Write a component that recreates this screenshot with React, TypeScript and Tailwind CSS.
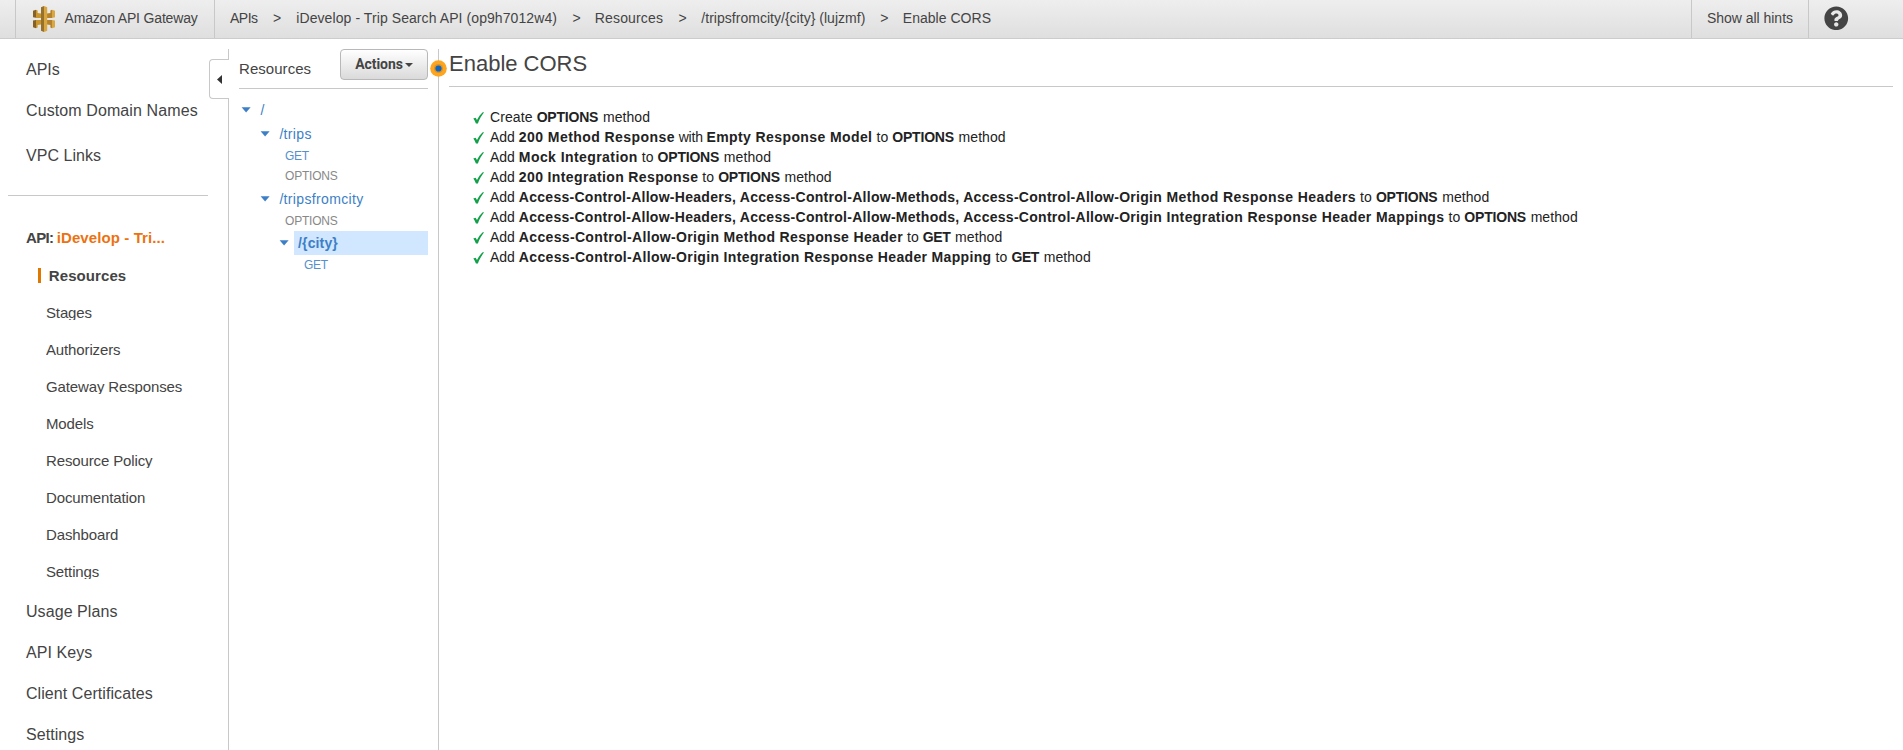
import React from "react";
import { FaQuestionCircle } from "react-icons/fa";

const crumbs = [
  { text: "APIs", cls: "w-[43px] tracking-[-0.5px]" },
  { text: ">", cls: "w-[23.3px]" },
  { text: "iDevelop - Trip Search API (op9h7012w4)", cls: "w-[276.1px] tracking-[0.08px]" },
  { text: ">", cls: "w-[22.4px]" },
  { text: "Resources", cls: "w-[83.700px] tracking-[0.15px]" },
  { text: ">", cls: "w-[22.9px]" },
  { text: "/tripsfromcity/{city} (lujzmf)", cls: "w-[178.9px] tracking-[0.02px]" },
  { text: ">", cls: "w-[22.6px]" },
  { text: "Enable CORS", cls: "tracking-[0.02px]" },
];

const apiItems = [
  "Stages",
  "Authorizers",
  "Gateway Responses",
  "Models",
  "Resource Policy",
  "Documentation",
  "Dashboard",
  "Settings",
];

const lowerItems = ["Usage Plans", "API Keys", "Client Certificates", "Settings"];

function Logo() {
  return (
    <svg width="22" height="26" viewBox="0 0 22 26" className="block shrink-0">
      <path d="M0 4.800 3 3.800V11.800L0 11.200z" fill="#876023" />
      <path d="M3 3.800l1.600.6V7L8 7.400V12H3z" fill="#c9952f" />
      <path d="M0 14.600 3 14v8.200l-3-1z" fill="#876023" />
      <path d="M3 14h5v4.600l-3.400.4v2.600l-1.600.6z" fill="#c9952f" />
      <path d="M17.400 4.400 19 3.800v8.200h-5V7.400l3.400-.4z" fill="#b5822b" />
      <path d="M19 3.800l3 1v6.400l-3 .8z" fill="#d9a741" />
      <path d="M14 14h5v8.200l-1.600-.6V19l-3.400-.4z" fill="#b5822b" />
      <path d="M19 14l3 .6v6.600l-3 1z" fill="#d9a741" />
      <path d="M8 1.300 11 0v26l-3-1.300z" fill="#97702a" />
      <path d="M11 0l3.200 1.300v23.400L11 26z" fill="#d9a741" />
    </svg>
  );
}

function Caret() {
  return (
    <svg width="10" height="6" viewBox="0 0 10 6" className="block shrink-0">
      <path d="M.6.300h9L5.100 5.500z" fill="#3d7fc6" />
    </svg>
  );
}

function Check() {
  return (
    <svg width="12" height="12" viewBox="0 0 12 12" className="mt-[5px] mr-[5px] block shrink-0">
      <path d="M.3 6.500 2.600 5.700 4 8.100C5.600 4.900 7.600 2 10 0l.9.600C8.500 3.800 6.400 7.200 4.900 11.500H2.900C2.200 9.600 1.400 7.900.3 6.500z" fill="#12a04a" />
    </svg>
  );
}

const Add = () => <span>Add </span>;
const To = () => <span className="tracking-[0.1px]"> to </span>;
const Options = () => <b className="tracking-[-0.2px]">OPTIONS</b>;
const Get = () => <b className="tracking-[-0.4px]">GET</b>;
const Method = () => <span className="ml-[0.700px] tracking-[0.08px]"> method</span>;
const AllowAll = () => (
  <span className="tracking-[0.28px]">
    Access-Control-Allow-Headers, Access-Control-Allow-Methods, Access-Control-Allow-Origin
  </span>
);

const steps = [
  <><span className="tracking-[0.1px]">Create </span><Options /><Method /></>,
  <><Add /><b className="tracking-[0.44px]">200 Method Response</b><span className="tracking-[-0.2px]"> with </span><b className="tracking-[0.4px]">Empty Response Model</b><To /><Options /><Method /></>,
  <><Add /><b className="tracking-[0.43px]">Mock Integration</b><To /><Options /><Method /></>,
  <><Add /><b className="tracking-[0.38px]">200 Integration Response</b><To /><Options /><Method /></>,
  <><Add /><b className="tracking-[0.43px]"><AllowAll /> Method Response Headers</b><To /><Options /><Method /></>,
  <><Add /><b className="tracking-[0.4px]"><AllowAll /> Integration Response Header Mappings</b><To /><Options /><Method /></>,
  <><Add /><b className="tracking-[0.34px]">Access-Control-Allow-Origin Method Response Header</b><To /><Get /><Method /></>,
  <><Add /><b className="tracking-[0.342px]">Access-Control-Allow-Origin Integration Response Header Mapping</b><To /><Get /><Method /></>,
];

function Header() {
  return (
    <header className="flex h-[39px] shrink-0 border-b border-[#cccccc] bg-linear-to-b from-[#eeeeee] to-[#dfdfdf] pl-[15px] text-[14px] leading-5 text-[#444444]">
      <div className="flex w-[199px] items-center border-l border-[#c8c8c8] pb-0.5 pl-[17px]">
        <div className="pt-px"><Logo /></div>
        <span className="ml-[9.500px] tracking-[-0.17px]">Amazon API Gateway</span>
      </div>
      <nav className="flex flex-1 items-center border-l border-[#c8c8c8] pb-0.5 pl-[15px]">
        {crumbs.map((c, i) => (
          <span key={i} className={`shrink-0 ${c.cls}`}>{c.text}</span>
        ))}
      </nav>
      <div className="flex w-[117px] items-center border-l border-[#c8c8c8] pb-0.5 pl-[15px] tracking-[-0.03px]">
        Show all hints
      </div>
      <div className="flex w-[95px] items-center border-l border-[#c8c8c8] pb-0.5 pl-[15px]">
        <FaQuestionCircle size={24.5} color="#444444" />
      </div>
    </header>
  );
}

function Sidebar() {
  return (
    <aside className="relative w-[229px] shrink-0 border-r border-[#c8c8c8] pt-[10px] text-[16px] leading-[21px]">
      <div className="h-[41px] pl-[26px]">APIs</div>
      <div className="h-[45px] pl-[26px] tracking-[0.1px]">Custom Domain Names</div>
      <div className="h-[50px] pl-[26px] tracking-[0.05px]">VPC Links</div>
      <div className="mr-5 ml-2 border-t border-[#c8c8c8]" />
      <div className="mt-[31px] flex h-[38px] pl-[26px] text-[15px] font-bold">
        <span className="w-[30.7px] tracking-[-0.7px]">API:</span>
        <span className="tracking-[0.1px] text-[#ec7211]">iDevelop - Tri...</span>
      </div>
      <div className="flex h-[39px] pl-[38px] text-[15px] font-bold">
        <div className="mt-[3px] mr-[7.800px] h-[15px] w-[3px] bg-[#e07700]" />
        <span className="tracking-[0.08px]">Resources</span>
      </div>
      {apiItems.map((t) => (
        <div key={t} className="h-[37px] pl-[46px] text-[15px] leading-[17px] tracking-[-0.13px]">
          <div className="h-4 overflow-hidden">{t}</div>
        </div>
      ))}
      <div className="pt-px">
        {lowerItems.map((t) => (
          <div key={t} className="h-[41px] pl-[26px] tracking-[0.07px]">{t}</div>
        ))}
      </div>
      <div className="absolute top-[10px] right-[-1px] flex h-[40px] w-[20px] items-center rounded-l-[4px] border border-r-0 border-[#c8c8c8] bg-white pl-[7px]">
        <svg width="5" height="9" viewBox="0 0 5 9"><path d="M5 0v9L0 4.500z" fill="#333333" /></svg>
      </div>
    </aside>
  );
}

function Resource({ name, cls }: { name: string; cls: string }) {
  return (
    <div className={`flex h-6 items-center text-[14px] leading-6 text-[#3d7fc6] ${cls}`}>
      <Caret />
      <span className="ml-[9px]">{name}</span>
    </div>
  );
}

function Tree() {
  return (
    <section className="relative w-[210px] shrink-0 border-r border-[#c8c8c8] pr-[10px] pl-[10px]">
      <div className="flex h-[40px] justify-between border-b border-[#c8c8c8]">
        <span className="mt-[9px] text-[15px] leading-[21px] tracking-[0.05px]">Resources</span>
        <button className="flex h-[31px] w-[88px] items-center justify-center rounded-[4px] border border-[#b8b8b8] bg-linear-to-b from-white to-[#dadada] font-['Roboto',sans-serif] text-[14px] leading-5 font-bold text-[#444444]">
          <span className="-mt-0.5 tracking-[-0.06px]">Actions</span>
          <svg width="8" height="4" viewBox="0 0 8 4" className="ml-[2px]"><path d="M0 0h8L4 4z" fill="#444444" /></svg>
        </button>
      </div>
      <div className="pt-[9px]">
        <Resource name="/" cls="pl-[2.400px]" />
        <Resource name="/trips" cls="pl-[21.400px] tracking-[0.33px]" />
        <div className="h-5 pl-[46px] text-[12px] leading-5 tracking-[-0.35px] text-[#5590cc]">GET</div>
        <div className="h-5 pl-[46px] text-[12px] leading-5 tracking-[-0.2px] text-[#888888]">OPTIONS</div>
        <Resource name="/tripsfromcity" cls="mt-px pl-[21.400px] tracking-[0.34px]" />
        <div className="h-5 pl-[46px] text-[12px] leading-5 tracking-[-0.2px] text-[#888888]">OPTIONS</div>
        <div className="flex h-6 items-center pl-[40px] text-[14px] leading-6 font-bold text-[#3d7fc6]">
          <Caret />
          <span className="ml-[5px] flex-1 bg-[#d0e7ff] pl-[4px] tracking-[0.15px]">{"/{city}"}</span>
        </div>
        <div className="h-5 pl-[65px] text-[12px] leading-5 tracking-[-0.35px] text-[#5590cc]">GET</div>
      </div>
      <svg width="17" height="17" viewBox="0 0 17 17" className="absolute top-[11px] right-[-9px]">
        <circle cx="8.500" cy="8.500" r="8.300" fill="#fea51f" />
        <circle cx="8.500" cy="8.500" r="4.600" fill="#d9932b" />
        <circle cx="8.500" cy="8.500" r="3.100" fill="#1166bb" />
      </svg>
    </section>
  );
}

export default function App() {
  return (
    <div className="flex h-[750px] flex-col overflow-hidden bg-white font-['Liberation_Sans',Arial,sans-serif] text-[#444444]">
      <Header />
      <div className="flex flex-1 pt-[10px]">
        <Sidebar />
        <Tree />
        <main className="flex-1 pr-[10px] pl-[10px]">
          <h1 className="h-[38px] border-b border-[#c8c8c8] text-[22px] leading-[29px] font-normal">Enable CORS</h1>
          <ul className="pt-[20px] pl-[24px] text-[14px] leading-5 text-[#222222]">
            {steps.map((s, i) => (
              <li key={i} className="flex h-5">
                <Check />
                <span className="whitespace-pre">{s}</span>
              </li>
            ))}
          </ul>
        </main>
      </div>
    </div>
  );
}
